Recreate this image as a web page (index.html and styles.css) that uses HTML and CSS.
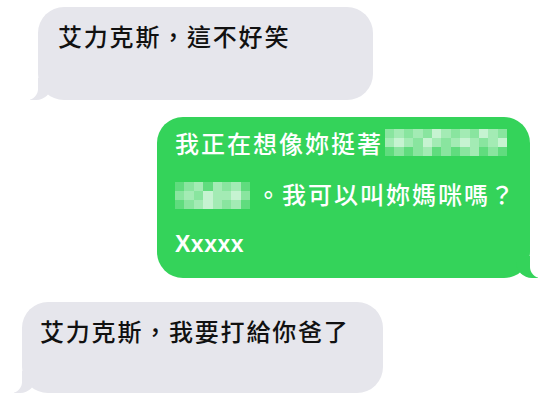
FILE: index.html
```html
<!DOCTYPE html>
<html lang="zh-Hant">
<head>
<meta charset="utf-8">
<link rel="stylesheet" href="styles.css">
</head>
<body>
<div class="thread">
  <div class="row row-in first">
    <div class="bubble in b1">艾力克斯，這不好笑</div>
  </div>
  <div class="row row-out">
    <div class="bubble out">
      <div class="line">我正在想像妳挺著<span class="pix pix-a"><i class="a"></i><i class="b"></i><i class="a"></i><i class="b"></i><i class="a"></i><i class="c"></i><i class="b"></i><i class="a"></i><i class="b"></i><i class="a"></i><i class="c"></i><i class="b"></i><i class="a"></i><i class="b"></i><i class="c"></i><i class="b"></i><i class="a"></i><i class="c"></i><i class="b"></i><i class="a"></i><i class="b"></i><i class="c"></i><i class="b"></i><i class="a"></i><i class="b"></i><i class="c"></i><i class="d"></i><i class="a"></i><i class="d"></i><i class="a"></i><i class="b"></i><i class="d"></i><i class="a"></i><i class="d"></i><i class="a"></i><i class="b"></i><i class="d"></i><i class="a"></i><i class="d"></i></span></div>
      <div class="line"><span class="pix pix-b"><i class="d"></i><i class="a"></i><i class="b"></i><i class="d"></i><i class="b"></i><i class="a"></i><i class="b"></i><i class="d"></i><i class="a"></i><i class="b"></i><i class="a"></i><i class="c"></i><i class="b"></i><i class="b"></i><i class="c"></i><i class="a"></i><i class="d"></i><i class="a"></i><i class="b"></i><i class="c"></i><i class="b"></i><i class="a"></i><i class="b"></i><i class="d"></i></span>。我可以叫妳媽咪嗎？</div>
      <div class="line latin">Xxxxx</div>
    </div>
  </div>
  <div class="row row-in last">
    <div class="bubble in b3">艾力克斯，我要打給你爸了</div>
  </div>
</div>
</body>
</html>
```

FILE: styles.css
```css
html, body {
  margin: 0;
  padding: 0;
  background: #ffffff;
}
body {
  width: 550px;
  height: 402px;
  overflow: hidden;
  font-family: "Noto Sans CJK TC", "Noto Sans", sans-serif;
}
.thread {
  display: flex;
  flex-direction: column;
}
.row {
  display: flex;
}
.row-in.first {
  padding: 7px 0 0 38px;
}
.row-out {
  justify-content: flex-end;
  padding: 17px 20px 0 0;
}
.row-in.last {
  padding: 24px 0 0 22px;
}
.bubble {
  position: relative;
  border-radius: 26px;
  font-size: 24px;
  font-weight: 500;
  letter-spacing: 1.8px;
  box-sizing: border-box;
}
.bubble.in {
  background: #e6e6ec;
  color: #111111;
}
.b1 {
  width: 335px;
  height: 93px;
  padding: 14px 20px 0 20px;
  line-height: 30px;
}
.b3 {
  width: 361px;
  height: 91px;
  padding: 14px 18px 0 18px;
  line-height: 30px;
}
.bubble.in::before {
  content: "";
  position: absolute;
  bottom: 0;
  left: -8px;
  width: 22px;
  height: 22px;
  background: #e6e6ec;
  border-bottom-right-radius: 16px;
}
.bubble.in::after {
  content: "";
  position: absolute;
  bottom: 0;
  left: -12px;
  width: 12px;
  height: 24px;
  background: #ffffff;
  border-bottom-right-radius: 11px;
}
.bubble.out {
  background: #34d35a;
  color: #ffffff;
  width: 373px;
  height: 161px;
  padding: 0 10px 0 18px;
  letter-spacing: 2px;
}
.bubble.out::before {
  content: "";
  position: absolute;
  bottom: 0;
  right: -8px;
  width: 22px;
  height: 22px;
  background: #34d35a;
  border-bottom-left-radius: 16px;
}
.bubble.out::after {
  content: "";
  position: absolute;
  bottom: 0;
  right: -12px;
  width: 12px;
  height: 24px;
  background: #ffffff;
  border-bottom-left-radius: 11px;
}
.line {
  height: 51px;
  line-height: 51px;
  white-space: nowrap;
  display: flex;
  align-items: center;
}
.line.latin {
  font-family: "Liberation Sans", Arial, sans-serif;
  font-weight: 700;
  font-size: 23px;
  letter-spacing: 0.5px;
}
.pix {
  display: inline-grid;
  grid-template-rows: repeat(3, 9px);
  margin: 0 2px 0 2px;
}
.pix-a {
  grid-template-columns: repeat(13, 9.4px);
}
.pix-b {
  grid-template-columns: repeat(8, 9.4px);
  margin: 4px 6px 0 0;
}
.pix i {
  display: block;
}
.pix .a { background: rgba(255, 255, 255, 0.42); }
.pix .b { background: rgba(255, 255, 255, 0.55); }
.pix .c { background: rgba(255, 255, 255, 0.72); }
.pix .d { background: rgba(255, 255, 255, 0.22); }
```
